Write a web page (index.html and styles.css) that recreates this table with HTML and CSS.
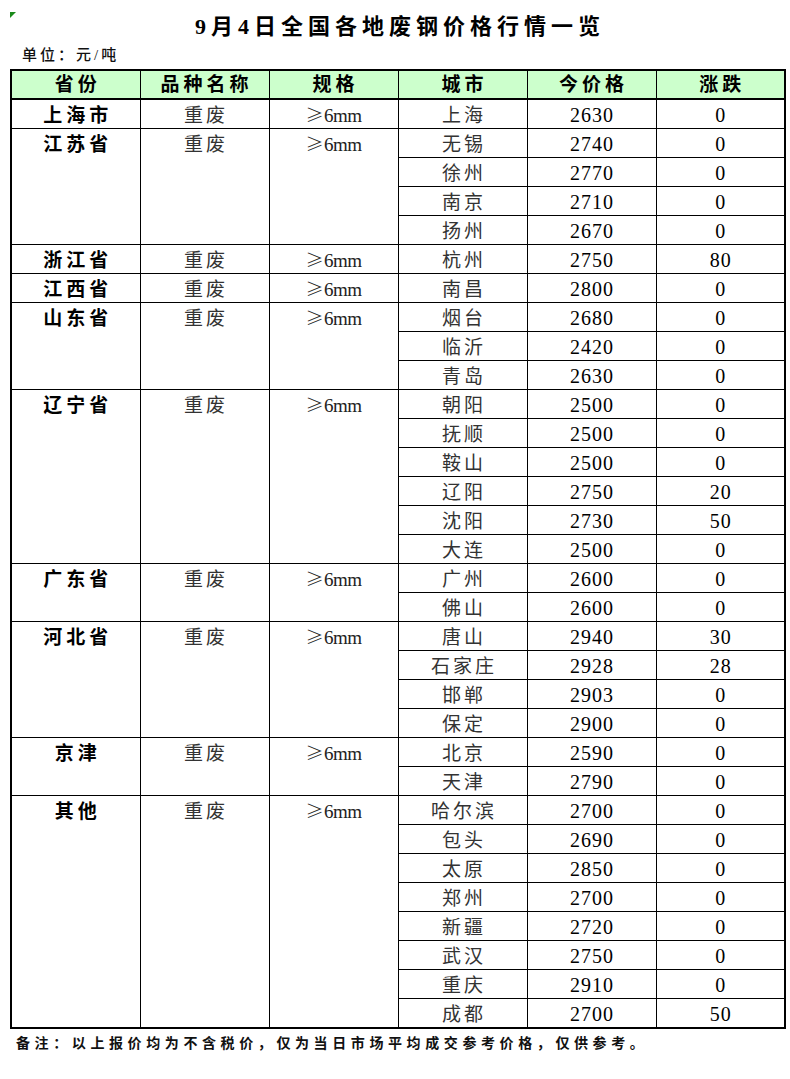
FILE: index.html
```html
<!DOCTYPE html>
<html lang="zh">
<head>
<meta charset="utf-8">
<link rel="stylesheet" href="styles.css">
</head>
<body>
<div class="page">
  <div class="marker"></div>
  <h1 class="title">9月4日全国各地废钢价格行情一览</h1>
  <div class="unit">单位：元/吨</div>
  <table class="grid">
    <colgroup>
      <col class="c1"><col class="c2"><col class="c3"><col class="c4"><col class="c5"><col class="c6">
    </colgroup>
    <thead>
      <tr class="head"><th>省份</th><th>品种名称</th><th>规格</th><th>城市</th><th>今价格</th><th>涨跌</th></tr>
    </thead>
    <tbody>
      <tr><td class="prov">上海市</td><td class="kind">重废</td><td class="spec"><span class="ge">≥</span>6mm</td><td class="city">上海</td><td class="num">2630</td><td class="num">0</td></tr>

      <tr><td class="prov" rowspan="4">江苏省</td><td class="kind" rowspan="4">重废</td><td class="spec" rowspan="4"><span class="ge">≥</span>6mm</td><td class="city">无锡</td><td class="num">2740</td><td class="num">0</td></tr>
      <tr><td class="city">徐州</td><td class="num">2770</td><td class="num">0</td></tr>
      <tr><td class="city">南京</td><td class="num">2710</td><td class="num">0</td></tr>
      <tr><td class="city">扬州</td><td class="num">2670</td><td class="num">0</td></tr>

      <tr><td class="prov">浙江省</td><td class="kind">重废</td><td class="spec"><span class="ge">≥</span>6mm</td><td class="city">杭州</td><td class="num">2750</td><td class="num">80</td></tr>

      <tr><td class="prov">江西省</td><td class="kind">重废</td><td class="spec"><span class="ge">≥</span>6mm</td><td class="city">南昌</td><td class="num">2800</td><td class="num">0</td></tr>

      <tr><td class="prov" rowspan="3">山东省</td><td class="kind" rowspan="3">重废</td><td class="spec" rowspan="3"><span class="ge">≥</span>6mm</td><td class="city">烟台</td><td class="num">2680</td><td class="num">0</td></tr>
      <tr><td class="city">临沂</td><td class="num">2420</td><td class="num">0</td></tr>
      <tr><td class="city">青岛</td><td class="num">2630</td><td class="num">0</td></tr>

      <tr><td class="prov" rowspan="6">辽宁省</td><td class="kind" rowspan="6">重废</td><td class="spec" rowspan="6"><span class="ge">≥</span>6mm</td><td class="city">朝阳</td><td class="num">2500</td><td class="num">0</td></tr>
      <tr><td class="city">抚顺</td><td class="num">2500</td><td class="num">0</td></tr>
      <tr><td class="city">鞍山</td><td class="num">2500</td><td class="num">0</td></tr>
      <tr><td class="city">辽阳</td><td class="num">2750</td><td class="num">20</td></tr>
      <tr><td class="city">沈阳</td><td class="num">2730</td><td class="num">50</td></tr>
      <tr><td class="city">大连</td><td class="num">2500</td><td class="num">0</td></tr>

      <tr><td class="prov" rowspan="2">广东省</td><td class="kind" rowspan="2">重废</td><td class="spec" rowspan="2"><span class="ge">≥</span>6mm</td><td class="city">广州</td><td class="num">2600</td><td class="num">0</td></tr>
      <tr><td class="city">佛山</td><td class="num">2600</td><td class="num">0</td></tr>

      <tr><td class="prov" rowspan="4">河北省</td><td class="kind" rowspan="4">重废</td><td class="spec" rowspan="4"><span class="ge">≥</span>6mm</td><td class="city">唐山</td><td class="num">2940</td><td class="num">30</td></tr>
      <tr><td class="city">石家庄</td><td class="num">2928</td><td class="num">28</td></tr>
      <tr><td class="city">邯郸</td><td class="num">2903</td><td class="num">0</td></tr>
      <tr><td class="city">保定</td><td class="num">2900</td><td class="num">0</td></tr>

      <tr><td class="prov" rowspan="2">京津</td><td class="kind" rowspan="2">重废</td><td class="spec" rowspan="2"><span class="ge">≥</span>6mm</td><td class="city">北京</td><td class="num">2590</td><td class="num">0</td></tr>
      <tr><td class="city">天津</td><td class="num">2790</td><td class="num">0</td></tr>

      <tr><td class="prov" rowspan="8">其他</td><td class="kind" rowspan="8">重废</td><td class="spec" rowspan="8"><span class="ge">≥</span>6mm</td><td class="city">哈尔滨</td><td class="num">2700</td><td class="num">0</td></tr>
      <tr><td class="city">包头</td><td class="num">2690</td><td class="num">0</td></tr>
      <tr><td class="city">太原</td><td class="num">2850</td><td class="num">0</td></tr>
      <tr><td class="city">郑州</td><td class="num">2700</td><td class="num">0</td></tr>
      <tr><td class="city">新疆</td><td class="num">2720</td><td class="num">0</td></tr>
      <tr><td class="city">武汉</td><td class="num">2750</td><td class="num">0</td></tr>
      <tr><td class="city">重庆</td><td class="num">2910</td><td class="num">0</td></tr>
      <tr><td class="city">成都</td><td class="num">2700</td><td class="num">50</td></tr>
    </tbody>
  </table>
  <div class="note">备注：以上报价均为不含税价，仅为当日市场平均成交参考价格，仅供参考。</div>
</div>
</body>
</html>
```

FILE: styles.css
```css
html, body {
  margin: 0;
  padding: 0;
  background: #ffffff;
}

body {
  font-family: "Liberation Serif", "Noto Sans CJK SC", serif;
  color: #000;
}

.page {
  position: relative;
  width: 790px;
  padding: 0 0 0 10px;
  box-sizing: border-box;
}

.marker {
  position: absolute;
  left: 10px;
  top: 12px;
  width: 0;
  height: 0;
  border-top: 6px solid #1a8a1a;
  border-right: 6px solid transparent;
}

.title {
  margin: 0;
  padding-top: 14px;
  height: 26px;
  line-height: 26px;
  text-align: center;
  font-size: 22px;
  font-weight: bold;
  letter-spacing: 5px;
  text-indent: 5px;
  width: 775px;
}

.unit {
  height: 29px;
  line-height: 31px;
  padding-left: 12px;
  font-size: 15px;
  letter-spacing: 3px;
  font-weight: 500;
  color: #111;
}

.grid {
  width: 775px;
  border-collapse: collapse;
  table-layout: fixed;
  border: 2px solid #000;
}

.grid col { width: 129px; }

.grid th,
.grid td {
  border: 1px solid #000;
  padding: 3px 0 0 0;
  height: 25px;
  line-height: 25px;
  text-align: center;
  vertical-align: top;
  white-space: nowrap;
  overflow: hidden;
}

.grid .head th {
  background: #ccffcc;
  font-size: 19px;
  font-weight: bold;
  letter-spacing: 4px;
  text-indent: 4px;
  height: 26px;
  line-height: 26px;
  padding: 1px 0 0 0;
  vertical-align: middle;
  border-bottom: 2px solid #000;
}

.prov {
  font-size: 19px;
  font-weight: bold;
  letter-spacing: 4px;
  text-indent: 4px;
}

.kind {
  font-size: 19px;
  color: #333;
  letter-spacing: 3px;
  text-indent: 3px;
}

.spec {
  font-size: 19px;
  color: #222;
  letter-spacing: -0.5px;
}

.spec .ge {
  font-family: "Noto Sans CJK SC", sans-serif;
  font-size: 18px;
  font-weight: 300;
  line-height: 0;
  margin-right: 1px;
}

.city {
  font-size: 19px;
  color: #333;
  letter-spacing: 3px;
  text-indent: 3px;
}

.num {
  font-size: 20px;
  letter-spacing: 1px;
  text-indent: 1px;
}

.note {
  height: 30px;
  line-height: 30px;
  padding-left: 6px;
  font-size: 14px;
  font-weight: bold;
  letter-spacing: 4.6px;
  color: #111;
}
```
